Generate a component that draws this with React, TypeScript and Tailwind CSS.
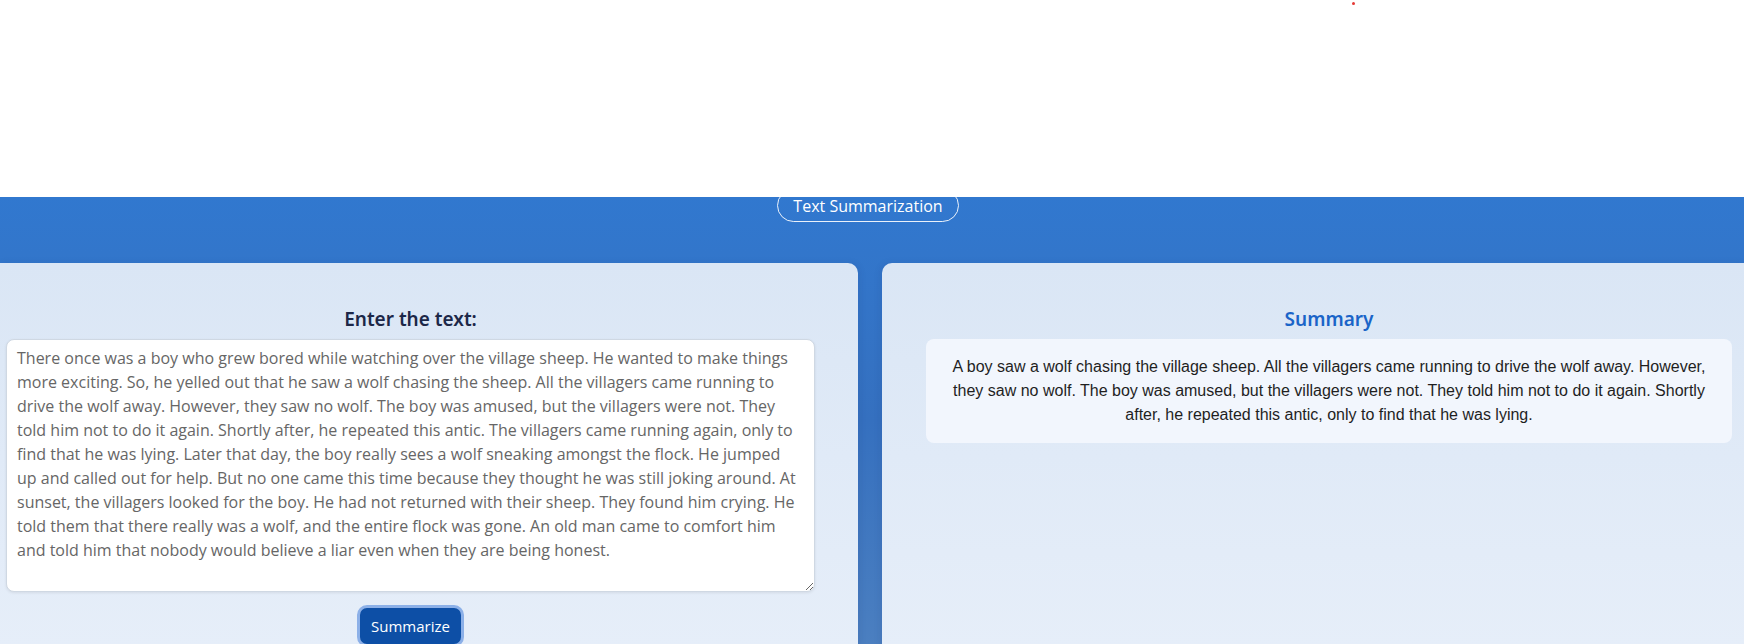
const storyText =
  "There once was a boy who grew bored while watching over the village sheep. He wanted to make things more exciting. So, he yelled out that he saw a wolf chasing the sheep. All the villagers came running to drive the wolf away. However, they saw no wolf. The boy was amused, but the villagers were not. They told him not to do it again. Shortly after, he repeated this antic. The villagers came running again, only to find that he was lying. Later that day, the boy really sees a wolf sneaking amongst the flock. He jumped up and called out for help. But no one came this time because they thought he was still joking around. At sunset, the villagers looked for the boy. He had not returned with their sheep. They found him crying. He told them that there really was a wolf, and the entire flock was gone. An old man came to comfort him and told him that nobody would believe a liar even when they are being honest.";

const summaryText =
  "A boy saw a wolf chasing the village sheep. All the villagers came running to drive the wolf away. However, they saw no wolf. The boy was amused, but the villagers were not. They told him not to do it again. Shortly after, he repeated this antic, only to find that he was lying.";

export default function App() {
  return (
    <div className="h-[644px] w-full overflow-hidden bg-white font-['Open_Sans',sans-serif]">
      {/* top white bar sits over the pill */}
      <div className="relative z-10 h-[197px] bg-white">
        <div className="ml-[1352px] pt-[2px]">
          <div className="h-[3px] w-[3px] rounded-full bg-[#e53935]" />
        </div>
      </div>

      <div className="flex h-[447px] flex-col bg-gradient-to-b from-[#3178cf] via-[#3570bf] to-[#4b7fc0]">
        <div className="flex justify-center pr-[8px]">
          <span className="-mt-[8px] flex h-[33px] w-[182px] items-center justify-center rounded-full border border-white/90 text-[16px] text-white">
            Text Summarization
          </span>
        </div>

        <div className="mt-[41px] flex flex-1 gap-[24px]">
          {/* left panel */}
          <div className="w-[858px] rounded-tr-[10px] bg-gradient-to-b from-[#dae6f5] to-[#e6eef9] pt-[42px] shadow-[2px_0_6px_rgba(30,60,120,0.12)]">
            <div className="ml-[6px] flex w-[809px] flex-col items-center">
              <h2 className="font-['Noto_Sans',sans-serif] text-[19px] leading-[28px] font-semibold text-[#1c2748]">
                Enter the text:
              </h2>
              <textarea
                defaultValue={storyText}
                className="mt-[6px] h-[253px] w-full rounded-[8px] border border-[#cfd8e3] bg-white py-[6px] pr-[16px] pl-[10px] text-[16px] leading-[24px] text-[#666666] shadow-[0_1px_3px_rgba(0,0,0,0.08)] outline-none"
              />
              <button className="mt-[13px] rounded-[10px] border-[3px] border-[#8cb0e8] bg-[#0d4fa6] px-[11px] py-[7px] text-[15px] leading-[22px] text-white">
                Summarize
              </button>
            </div>
          </div>

          {/* right panel */}
          <div className="flex-1 rounded-tl-[10px] bg-gradient-to-b from-[#dae6f5] to-[#e6eef9] pt-[42px] pr-[12px] pl-[44px] shadow-[-2px_0_6px_rgba(30,60,120,0.12)]">
            <h2 className="text-center font-['Noto_Sans',sans-serif] text-[19px] leading-[28px] font-semibold text-[#1a64c8]">
              Summary
            </h2>
            <div className="mt-[6px] h-[104px] rounded-[8px] bg-[#f2f6fd] px-[24px] pt-[16px] text-center font-['Liberation_Sans',Arial,sans-serif] text-[16px] leading-[24px] text-[#1f1f1f]">
              {summaryText}
            </div>
          </div>
        </div>
      </div>
    </div>
  );
}
